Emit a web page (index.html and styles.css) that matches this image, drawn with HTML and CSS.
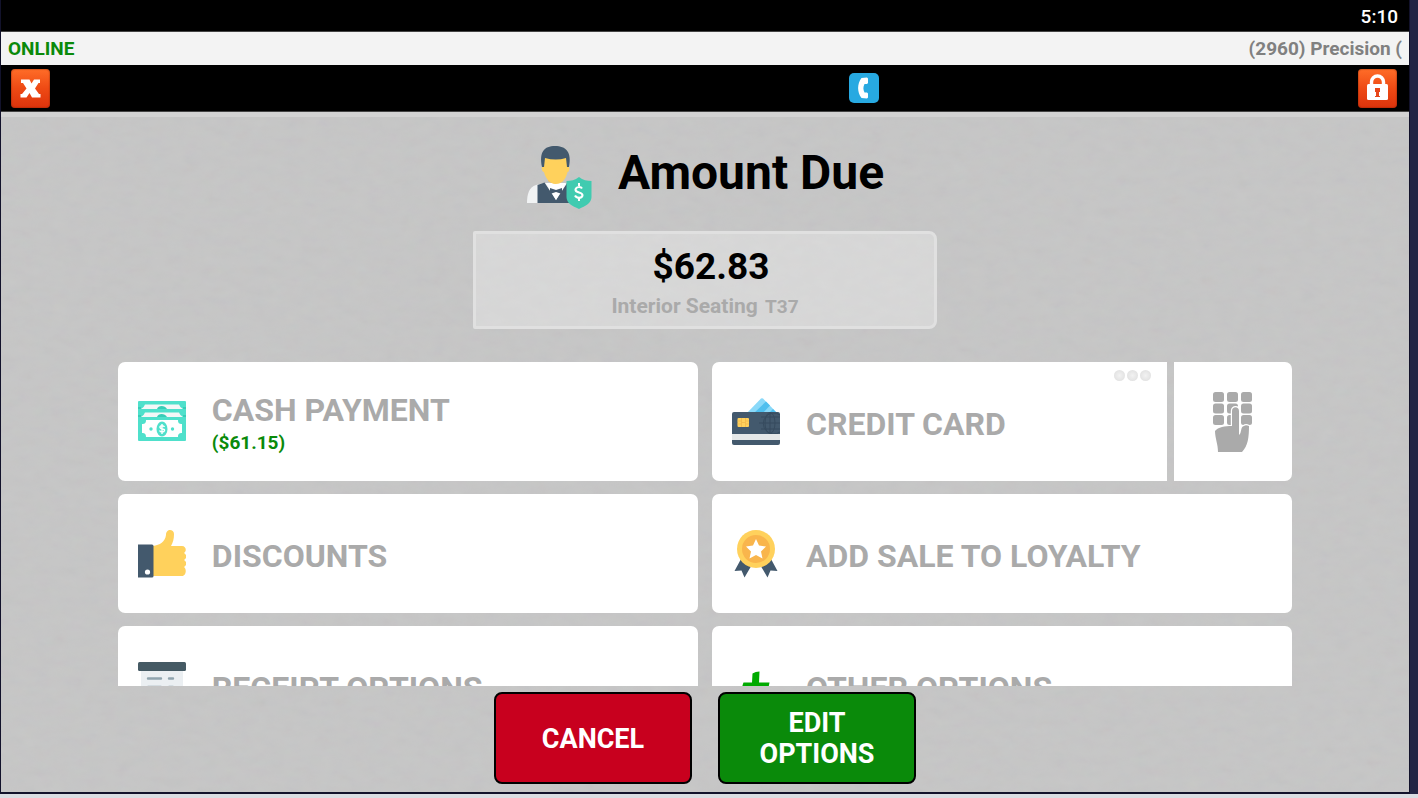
FILE: index.html
```
<!DOCTYPE html>
<html lang="en">
<head>
    <meta charset="UTF-8">
    <meta name="viewport" content="width=device-width, initial-scale=1.0">
    <title>Amount Due</title>
    <link rel="stylesheet" href="styles.css">
</head>
<body>
    <div class="screen">
        <div class="clock">5:10</div>

        <div class="status">
            <span class="online">ONLINE</span>
            <span class="station">(2960) Precision (</span>
        </div>

        <header class="toolbar">
            <button class="tool" type="button" aria-label="Close">
                <svg width="39" height="39" viewBox="0 0 39 39">
                    <path d="M10 10.500h8.500l2 4 2.500-4h6v3.500h-1.500L24 19.500l4 5.500h1.500v3.500H21l-2.500-4.500-3 4.500h-6V25H11l4.500-5.500L12 14h-2z" fill="#fff"/>
                </svg>
            </button>
            <button class="phone" type="button" aria-label="Call">
                <svg width="30" height="30" viewBox="0 0 30 30">
                    <path d="M12.500 5L18 4.500l1 1V10l-1 1h-2.500c-1.500 3-1.500 5.500 0 8.500H18l1 1v4l-1 1-5.500-.5C8 19 8 11 12.500 5z" fill="#fff"/>
                </svg>
            </button>
            <button class="tool" type="button" aria-label="Lock">
                <svg width="39" height="39" viewBox="0 0 39 39">
                    <path d="M13.500 16v-3a6 6 0 0 1 12 0v3" fill="none" stroke="#fff" stroke-width="3.400"/>
                    <rect x="9" y="15" width="21" height="16" rx="1.500" fill="#fff"/>
                    <path d="M17 19h5v4h-1v4h1v1h-5v-1h1v-4h-1z" fill="#e8461a"/>
                </svg>
            </button>
        </header>

        <main class="payment">
            <!-- paper grain behind the whole payment area -->
            <svg class="grain" aria-hidden="true">
                <filter id="paper">
                    <feTurbulence type="fractalNoise" baseFrequency="0.06 0.1" numOctaves="3" seed="4"/>
                    <feColorMatrix type="saturate" values="0.5"/>
                </filter>
                <rect width="100%" height="100%" filter="url(#paper)"/>
            </svg>

            <div class="title">
                <svg width="66" height="66" viewBox="0 0 66 66" aria-hidden="true">
                    <path d="M1 59c0-9 2-16 9-18l8-2h20l8 3v17z" fill="#f1f3f4"/>
                    <path d="M11.500 41l7-2.500L30 56l11.500-17.500 5 2V59h-35z" fill="#43596d"/>
                    <path d="M20 39h20L30 56z" fill="#fff"/>
                    <path d="M22 31h15v6q-7.500 5-15 0z" fill="#f0b54e"/>
                    <path d="M17 14q12-5 25 0v8c2 0 2 6-.5 6-2 9-7 12-12 12s-10-5-11.500-12c-2.500 0-3-6-1-6z" fill="#ffd15c"/>
                    <path d="M16 23C13 8 18 2 29 2s17 6 14 21h-2l-1-9q-10 3-21 0l-1 9z" fill="#43596d"/>
                    <path d="M24 44l6 2 6-2v6l-6-2-6 2z" fill="#43596d"/>
                    <path d="M53 33c4 3 8 4 12.500 4v16c0 6-6 9-12.500 12-7-3-12.500-6-12.500-12V37C45 37 49 36 53 33z" fill="#40cbb0"/>
                    <path d="M56 44.500c-1-2-6-2-6.500 1-.5 4 7.500 2 7 6-.5 3-6 3-7.500 0M53 39v3m0 11v4" fill="none" stroke="#fff" stroke-width="2"/>
                </svg>
                <h1>Amount Due</h1>
            </div>

            <div class="total">
                <div class="amount">$62.83</div>
                <div class="seat">Interior Seating <span class="table-no">T37</span></div>
            </div>

            <div class="options">
                <button class="card" type="button">
                    <svg class="icon" viewBox="0 0 48 48" aria-hidden="true">
                        <rect y="3" width="48" height="40" rx="1" fill="#4fe0cb"/>
                        <path d="M7 6.500h34q1 3 4 4.500H3q3-1.500 4-4.500zM7 14.500h34q1 3 4 4.500H3q3-1.500 4-4.500z" fill="#f4f7f7"/>
                        <path d="M19 11c1-4 8-4 10 0zM19 19c1-4 8-4 10 0z" fill="#38cdb7"/>
                        <path d="M0 9h3v2H0zM0 17h3v2H0zM45 9h3v2h-3zM45 17h3v2h-3z" fill="#38cdb7"/>
                        <path d="M8 22h32c0 3 1 4 4 4v9c-3 0-4 1-4 4H8c0-3-1-4-4-4v-9c3 0 4-1 4-4z" fill="#fff"/>
                        <ellipse cx="24" cy="31" rx="5.500" ry="7.500" fill="#4fe0cb"/>
                        <circle cx="13" cy="31" r="1.700" fill="#4fe0cb"/>
                        <circle cx="34.500" cy="31" r="1.700" fill="#4fe0cb"/>
                        <path d="M26.500 29c-1-2-5-1.500-4.500.5s5 1 4.500 3-4 2-5 0M24 26v10" fill="none" stroke="#fff" stroke-width="1.400"/>
                    </svg>
                    <span class="label">CASH PAYMENT<small>($61.15)</small></span>
                </button>

                <div class="split">
                    <button class="card credit" type="button">
                        <svg class="icon" viewBox="0 0 48 48" aria-hidden="true">
                            <path d="M14 16L29 .5Q30 0 31 .5L46 16z" fill="#8ad9f9"/>
                            <path d="M21 16L34 3.500l4 4L30 16zM36 16l5-5 5 5z" fill="#4fbfee"/>
                            <rect y="14" width="48" height="33" rx="2" fill="#43596d"/>
                            <g fill="none" stroke="#364b5e" stroke-width="1">
                                <path d="M48 17a10.500 10.500 0 1 0 0 17"/>
                                <ellipse cx="38" cy="25" rx="5" ry="10.500"/>
                                <path d="M38 15v20M27 25h21M29 19h19M29 31h19"/>
                            </g>
                            <path d="M0 36h48v6H0z" fill="#e5e8e8"/>
                            <rect x="5.500" y="20" width="11.500" height="9" rx="1" fill="#ffd15c"/>
                            <path d="M5.500 23h4m0 3h-4m4-6v9m4-9v9m0-6H17m-3.500 3H17m-7.500-1.500h4" fill="none" stroke="#f3b94b" stroke-width=".8"/>
                        </svg>
                        <span class="label">CREDIT CARD</span>
                        <span class="dots"><i></i><i></i><i></i></span>
                    </button>
                    <button class="card keypad" type="button" aria-label="Enter card by hand">
                        <svg width="40" height="62" viewBox="0 0 40 62">
                            <g fill="#aaa">
                                <rect x="0" y="1" width="11" height="10" rx="2.500"/>
                                <rect x="14" y="1" width="11" height="10" rx="2.500"/>
                                <rect x="28" y="1" width="11" height="10" rx="2.500"/>
                                <rect x="0" y="12.500" width="11" height="10" rx="2.500"/>
                                <rect x="14" y="12.500" width="11" height="10" rx="2.500"/>
                                <rect x="28" y="12.500" width="11" height="10" rx="2.500"/>
                                <rect x="0" y="24" width="11" height="10" rx="2.500"/>
                                <rect x="14" y="24" width="11" height="10" rx="2.500"/>
                                <rect x="28" y="24" width="11" height="10" rx="2.500"/>
                            </g>
                            <path d="M5 61C5 53 2 47 2 40c3-4 10-5 17-5V20c0-5 7-5 7 0v24c3-2 1-8 5-9 1-1 3-1 5 0 0 11-1 20-7 26z" fill="#aaa" stroke="#fff" stroke-width="2.400" paint-order="stroke"/>
                        </svg>
                    </button>
                </div>

                <button class="card" type="button">
                    <svg class="icon" viewBox="0 0 48 48" aria-hidden="true">
                        <path d="M15 16c7-1 12-4 13-11 0-7 8-6 8-1 0 5-1 8-3 12h11c4 0 5 5 2 7 3 2 3 5 0 7 3 2 3 5 0 7 3 2 2 9-2 9H15z" fill="#ffd15c"/>
                        <path d="M0 14.500h14q1.500 0 1.500 1.500v30q0 1.500-1.500 1.500H0z" fill="#43596d"/>
                        <circle cx="9.500" cy="42" r="2.600" fill="#fff"/>
                    </svg>
                    <span class="label">DISCOUNTS</span>
                </button>

                <button class="card" type="button">
                    <svg class="icon" viewBox="0 0 48 48" aria-hidden="true">
                        <path d="M9 29L2.500 41l7-.5 3 7 7-12zM39 29l6.500 12-7-.5-3 7-7-12z" fill="#43596d"/>
                        <circle cx="24" cy="19" r="19" fill="#ffd15c"/>
                        <circle cx="24" cy="19" r="14" fill="#f9b54c"/>
                        <path d="M24 9l3 6.500 7 1-5 5 1.500 7L24 25l-6.500 3.500 1.500-7-5-5 7-1z" fill="#fff"/>
                    </svg>
                    <span class="label">ADD SALE TO LOYALTY</span>
                </button>

                <button class="card" type="button">
                    <svg class="icon" viewBox="0 0 48 48" aria-hidden="true">
                        <path d="M3 6h42v42l-6-4-5 4-5-4-5 4-5-4-5 4-5-4-6 4z" fill="#ebeff2"/>
                        <rect width="48" height="9" rx="1.500" fill="#455a64"/>
                        <path d="M10 16.500h13M31 16.500h4M10 25h13M31 25h4M10 33h13M31 33h4" stroke="#90a4ae" stroke-width="2.400" stroke-linecap="round"/>
                    </svg>
                    <span class="label">RECEIPT OPTIONS</span>
                </button>

                <button class="card" type="button">
                    <svg class="icon" viewBox="0 0 48 48" aria-hidden="true">
                        <path d="M20.500 11.500q3-2 7-2l-.5 11h10.500l-1.500 7.500H27l-1 10h-7l.5-10H10q0-4 1.500-7.500H20z" fill="#0a0"/>
                    </svg>
                    <span class="label">OTHER OPTIONS</span>
                </button>
            </div>

            <footer class="actions">
                <button class="action cancel" type="button">CANCEL</button>
                <button class="action edit" type="button">EDIT OPTIONS</button>
            </footer>
        </main>
    </div>
</body>
</html>
```
FILE: styles.css
```
* {
    box-sizing: border-box;
}

body {
    margin: 0;
    height: 100vh;
    padding: 0 8px 4px 0;
    background: linear-gradient(#dadde2, #dadde2) bottom / 100% 4px no-repeat #232544;
    font-family: Roboto, "Liberation Sans", sans-serif;
    font-weight: 700;
}

button {
    font: inherit;
    padding: 0;
    border: 0;
    cursor: pointer;
}

svg {
    display: block;
    flex: none;
}

.screen {
    height: 100%;
    display: flex;
    flex-direction: column;
    background: #000;
    border: solid #12122b;
    border-width: 0 1px 2px;
}

/* Top bars */
.clock {
    height: 32px;
    padding-right: 11px;
    border-bottom: 1px solid #444;
    color: #fff;
    font-size: 19px;
    font-weight: 500;
    line-height: 33px;
    text-align: right;
}

.status {
    display: flex;
    justify-content: space-between;
    height: 33px;
    padding: 0 7px;
    background: #f3f3f3;
    font-size: 19px;
    line-height: 34px;
}

.online {
    color: #0a8a0a;
}

.station {
    color: #808080;
}

.toolbar {
    display: grid;
    grid-template-columns: 21fr 30px 13fr;
    align-items: center;
    height: 47px;
    padding: 0 12px 0 10px;
    border-bottom: 1px solid #444;
}

.tool {
    width: 39px;
    height: 39px;
    border-radius: 4px;
    background: linear-gradient(#ff6d28, #ee4a14 50%, #dd330c);
    box-shadow: inset 0 0 1px 1px rgba(120, 30, 0, 0.3);
}

.tool:last-child {
    justify-self: end;
}

.phone {
    width: 30px;
    height: 30px;
    border-radius: 5px;
    background: #27a9e1;
}

/* Payment area */
.payment {
    position: relative;
    isolation: isolate;
    flex: 1;
    min-height: 0;
    display: flex;
    flex-direction: column;
    align-items: center;
    border-top: 5px solid #d2d2d2;
    background: #c6c6c6;
}

.grain {
    position: absolute;
    inset: 0;
    z-index: -1;
    width: 100%;
    height: 100%;
    opacity: 0.07;
}

.title {
    display: flex;
    align-items: center;
    gap: 26px;
    margin-top: 27px;
}

.title h1 {
    margin: 0 0 8px;
    font-size: 48px;
    line-height: 56px;
}

.total {
    width: 33%;
    min-width: 320px;
    height: 98px;
    margin: 21px 0 33px;
    padding-top: 11px;
    border: 3px solid #e0e0e0;
    border-radius: 2px 8px 8px 2px;
    background: rgba(255, 255, 255, 0.3);
    text-align: center;
}

.amount {
    padding-left: 12px;
    font-size: 37px;
    line-height: 44px;
}

.seat {
    color: #aaa;
    font-size: 21px;
    line-height: 34px;
}

.table-no {
    margin-left: 2px;
    font-size: 19px;
}

.options {
    flex: 1;
    min-height: 0;
    width: 83.4%;
    display: grid;
    grid-template-columns: 1fr 1fr;
    grid-auto-rows: 119px;
    gap: 13px 14px;
    overflow-y: auto;
    scrollbar-width: none;
}

.card {
    position: relative;
    display: flex;
    align-items: center;
    gap: 26px;
    padding: 0 20px;
    border-radius: 7px;
    background: #fff;
    color: #aaa;
    font-size: 32px;
    line-height: 38px;
    text-align: left;
}

.icon {
    width: 48px;
    height: 48px;
}

.label {
    padding-top: 5px;
}

.label small {
    display: block;
    color: #0a8a0a;
    font-size: 19px;
    line-height: 28px;
}

.split {
    display: flex;
    gap: 7px;
}

.credit {
    flex: 1;
    border-radius: 7px 0 0 7px;
}

.keypad {
    width: 118px;
    justify-content: center;
    border-radius: 0 7px 7px 0;
}

.dots {
    position: absolute;
    top: 8px;
    right: 16px;
    display: flex;
    gap: 2px;
}

.dots i {
    width: 11px;
    height: 11px;
    border-radius: 50%;
    background: radial-gradient(#f2f2f2, #dcdcdc);
}

/* Bottom buttons */
.actions {
    display: flex;
    gap: 26px;
    padding: 6px 0 8px;
}

.action {
    width: 198px;
    height: 92px;
    padding: 2px 30px 0;
    border: 2px solid #000;
    border-radius: 8px;
    color: #fff;
    font-size: 27px;
    line-height: 31px;
}

.cancel {
    background: #c8001e;
}

.edit {
    background: #0a8a0a;
}
```
